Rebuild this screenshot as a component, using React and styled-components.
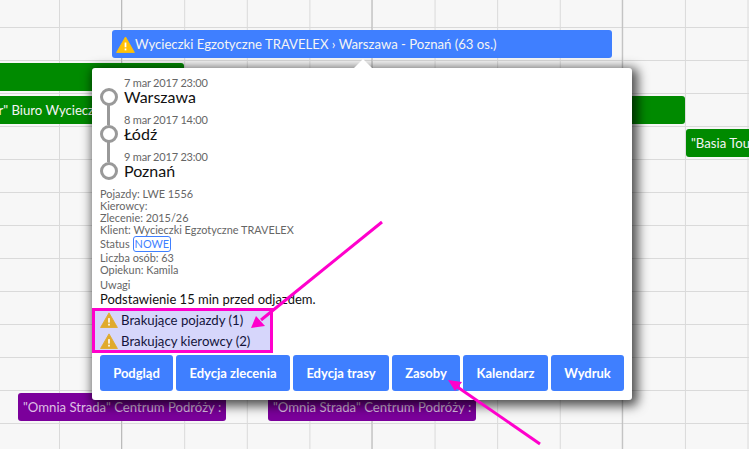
import React from 'react';
import styled, { createGlobalStyle } from 'styled-components';

const Global = createGlobalStyle`
  html, body {
    margin: 0;
    padding: 0;
    background: #f7f7f7;
    overflow: hidden;
  }
`;

const Canvas = styled.div`
  position: relative;
  width: 749px;
  height: 449px;
  overflow: hidden;
  font-family: Lato, "Open Sans", sans-serif;
  background-color: #f7f7f7;
  background-image:
    linear-gradient(90deg, #bbb 1px, transparent 1px),
    linear-gradient(90deg, #dadada 1px, transparent 1px),
    linear-gradient(180deg, #dadada 1px, transparent 1px);
  background-size: 250.4px 100%, 62.6px 100%, 100% 33px;
  background-position: 121px 0, 59px 0, 0 27px;
`;

const colors = { blue: '#3f7fff', green: '#008a00', purple: '#7b009b' };

const Event = styled.div`
  position: absolute;
  left: ${p => p.$x}px;
  top: ${p => p.$y}px;
  width: ${p => p.$w}px;
  height: 28px;
  box-sizing: border-box;
  padding: 0 5px;
  display: flex;
  align-items: center;
  overflow: hidden;
  white-space: nowrap;
  border-radius: 3px;
  background: ${p => colors[p.$color]};
  color: ${p => (p.$color === 'purple' ? 'rgba(255, 255, 255, 0.75)' : '#f4f4f4')};
  font-size: 13.15px;
`;

const Popup = styled.div`
  position: absolute;
  left: 92px;
  top: 68px;
  width: 540px;
  height: 332px;
  box-sizing: border-box;
  padding: 8px 8px 9px;
  display: flex;
  flex-direction: column;
  background: #fff;
  border-radius: 3px;
  box-shadow: 3px 3px 11px 3px rgba(0, 0, 0, 0.68);
  &::before {
    content: '';
    position: absolute;
    left: 262px;
    top: -9px;
    border-left: 9px solid transparent;
    border-right: 9px solid transparent;
    border-bottom: 9px solid #fff;
  }
`;

const Route = styled.ol`
  list-style: none;
  margin: 0;
  padding: 0;
  display: flex;
  flex-direction: column;
`;

const Stop = styled.li`
  position: relative;
  height: 37px;
  padding-left: 24px;
  &::before {
    content: '';
    position: absolute;
    left: 0;
    top: 12px;
    width: 12px;
    height: 12px;
    border: 3px solid #999;
    border-radius: 50%;
    background: #fff;
    z-index: 1;
  }
  &:not(:last-child)::after {
    content: '';
    position: absolute;
    left: 7px;
    top: 24px;
    width: 3px;
    height: 25px;
    background: #999;
  }
`;

const StopDate = styled.div`
  padding-top: 1px;
  font-size: 11px;
  letter-spacing: -0.2px;
  line-height: 11px;
  color: #666;
`;

const StopName = styled.div`
  font-size: 16px;
  line-height: 18px;
  color: #111;
`;

const Details = styled.div`
  margin-top: 1px;
  font-size: 10.9px;
  line-height: 12px;
  color: #666;
`;

const StatusRow = styled.div`
  display: flex;
  align-items: center;
  gap: 3px;
  height: 16px;
`;

const Badge = styled.span`
  box-sizing: border-box;
  height: 16px;
  line-height: 14px;
  padding: 0 1px;
  border: 1px solid ${colors.blue};
  border-radius: 3px;
  color: ${colors.blue};
`;

const NotesLabel = styled.div`
  margin-top: 2px;
  font-size: 11px;
  line-height: 14px;
  color: #666;
`;

const Notes = styled.div`
  font-size: 13px;
  line-height: 15px;
  color: #111;
`;

const Warnings = styled.div`
  margin: 1px 0 2px -8px;
  width: 181px;
  height: 45px;
  box-sizing: border-box;
  border: 3px solid #ff00cc;
  background: #d6d6fb;
  padding: 0 0 0 5px;
  display: flex;
  flex-direction: column;
  justify-content: center;
  gap: 3px;
`;

const Warning = styled.div`
  display: flex;
  align-items: center;
  gap: 3px;
  height: 18px;
  font-size: 13.2px;
  color: #14143c;
`;

const Buttons = styled.div`
  display: flex;
  gap: 3px;
`;

const Button = styled.button`
  width: ${p => p.$w}px;
  height: 36px;
  padding: 0;
  border: 0;
  border-radius: 3px;
  background: ${colors.blue};
  color: #fff;
  font-family: inherit;
  font-size: 13px;
  font-weight: 700;
`;

const Overlay = styled.svg`
  position: absolute;
  left: 0;
  top: 0;
`;

const WarnIcon = ({ size, fill }) => (
  <svg width={size} height={size} viewBox="0 0 24 24">
    <path d="M12 2.5 L23.2 22 H0.8 Z" fill={fill} stroke={fill} strokeWidth="1.2" strokeLinejoin="round" />
    <rect x="10.9" y="9.5" width="2.2" height="6" fill="#fff" />
    <rect x="10.9" y="17" width="2.2" height="2.4" fill="#fff" />
  </svg>
);

const stops = [
  ['7 mar 2017 23:00', 'Warszawa'],
  ['8 mar 2017 14:00', 'Łódź'],
  ['9 mar 2017 23:00', 'Poznań'],
];

const actions = [
  ['Podgląd', 73],
  ['Edycja zlecenia', 114],
  ['Edycja trasy', 96],
  ['Zasoby', 68],
  ['Kalendarz', 85],
  ['Wydruk', 73],
];

const App = () => (
  <Canvas>
    <Global />
    <Event $x={112} $y={30} $w={500} $color="blue" style={{ paddingLeft: 4 }}>
      <WarnIcon size={19} fill="#ffc107" />
      Wycieczki Egzotyczne TRAVELEX › Warszawa - Poznań (63 os.)
    </Event>
    <Event $x={-10} $y={63} $w={194} $color="green" />
    <Event $x={-50} $y={96} $w={735} $color="green">
      "Wektor" Biuro Wycieczkowe
    </Event>
    <Event $x={686} $y={129} $w={100} $color="green">
      "Basia Tour"
    </Event>
    <Event $x={18} $y={393} $w={208} $color="purple">
      "Omnia Strada" Centrum Podróży :
    </Event>
    <Event $x={268} $y={393} $w={208} $color="purple">
      "Omnia Strada" Centrum Podróży :
    </Event>

    <Popup>
      <Route>
        {stops.map(([date, name]) => (
          <Stop key={name}>
            <StopDate>{date}</StopDate>
            <StopName>{name}</StopName>
          </Stop>
        ))}
      </Route>
      <Details>
        <div>Pojazdy: LWE 1556</div>
        <div>Kierowcy:</div>
        <div>Zlecenie: 2015/26</div>
        <div>Klient: Wycieczki Egzotyczne TRAVELEX</div>
        <StatusRow>
          Status <Badge>NOWE</Badge>
        </StatusRow>
        <div>Liczba osób: 63</div>
        <div>Opiekun: Kamila</div>
      </Details>
      <NotesLabel>Uwagi</NotesLabel>
      <Notes>Podstawienie 15 min przed odjazdem.</Notes>
      <Warnings>
        <Warning>
          <WarnIcon size={18} fill="#e0aa2c" />
          Brakujące pojazdy (1)
        </Warning>
        <Warning>
          <WarnIcon size={18} fill="#e0aa2c" />
          Brakujący kierowcy (2)
        </Warning>
      </Warnings>
      <Buttons>
        {actions.map(([label, w]) => (
          <Button key={label} $w={w}>
            {label}
          </Button>
        ))}
      </Buttons>
    </Popup>

    <Overlay width="749" height="449">
      <line x1="382" y1="222" x2="261" y2="320" stroke="#ff00cc" strokeWidth="3" />
      <path d="M251 328 L256 316 L265 326 Z" fill="#ff00cc" />
      <line x1="540" y1="444" x2="456" y2="386" stroke="#ff00cc" strokeWidth="3" />
      <path d="M448 380 L462 382 L455 391 Z" fill="#ff00cc" />
    </Overlay>
  </Canvas>
);

export default App;
